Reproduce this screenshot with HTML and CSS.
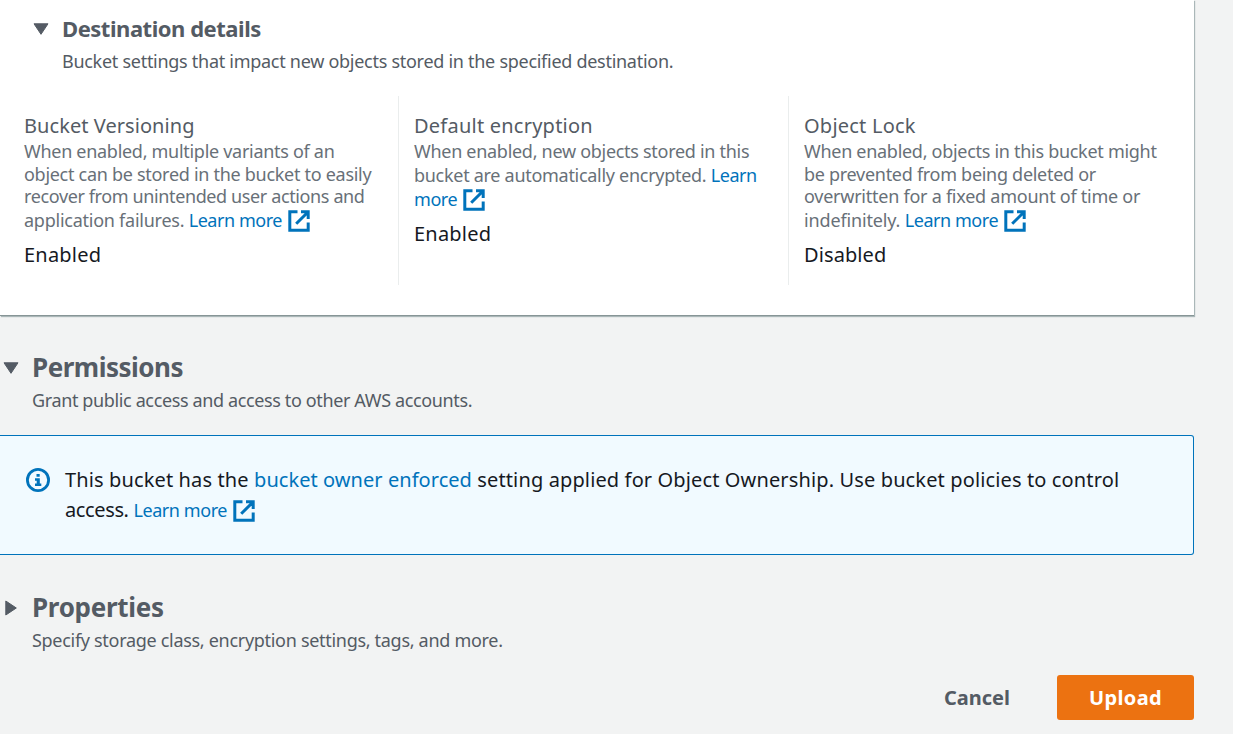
FILE: index.html
```html
<!DOCTYPE html>
<html lang="en">
<head>
<meta charset="utf-8">
<title>Upload</title>
<link rel="stylesheet" href="styles.css">
</head>
<body>
<svg width="0" height="0" class="sprite">
  <symbol id="external" viewBox="0 0 24 24"><path d="M10.5 2.8H2.8v18.4h18.4v-7.7M14 2.8h7.2V10M21 3L9.2 14.8" fill="none" stroke="#0073bb" stroke-width="3"/></symbol>
  <symbol id="caret" viewBox="0 0 16 12"><path d="M1 .8h14L8 11.3z" fill="#545b64" stroke="#545b64" stroke-linejoin="round"/></symbol>
</svg>
<main class="page">
  <section class="panel">
    <header class="panel-head">
      <svg class="caret"><use href="#caret"/></svg>
      <div>
        <h3 class="panel-title">Destination details</h3>
        <p class="sub sub-dest">Bucket settings that impact new objects stored in the specified destination.</p>
      </div>
    </header>
    <div class="columns">
      <div class="column">
        <h4 class="label label-ver">Bucket Versioning</h4>
        <p class="desc">When enabled, multiple variants of an<br>object can be stored in the bucket to easily<br><span class="tight">recover from unintended user actions and</span></p>
        <p class="desc last"><span class="loose">application failures. </span><a>Learn more</a><svg class="ext"><use href="#external"/></svg></p>
        <p class="value">Enabled</p>
      </div>
      <div class="column">
        <h4 class="label">Default encryption</h4>
        <p class="desc">When enabled, new objects stored in this</p>
        <p class="desc last"><span>bucket are automatically encrypted. </span><a>Learn</a></p>
        <p class="desc last"><a>more</a><svg class="ext"><use href="#external"/></svg></p>
        <p class="value">Enabled</p>
      </div>
      <div class="column">
        <h4 class="label">Object Lock</h4>
        <p class="desc">When enabled, objects in this bucket might<br>be prevented from being deleted or<br><span class="loose">overwritten for a fixed amount of time or</span></p>
        <p class="desc last"><span class="looser">indefinitely. </span><a>Learn more</a><svg class="ext"><use href="#external"/></svg></p>
        <p class="value value-off">Disabled</p>
      </div>
    </div>
  </section>

  <section class="section">
    <svg class="caret"><use href="#caret"/></svg>
    <div>
      <h2 class="title">Permissions</h2>
      <p class="sub sub-perm">Grant public access and access to other AWS accounts.</p>
    </div>
  </section>

  <div class="alert">
    <svg class="info" viewBox="0 0 24 24"><circle cx="12" cy="12" r="10.6" fill="none" stroke="#0073bb" stroke-width="2.8"/><path d="M10.5 6h3.2v2.8h-3.2zM9 10.2h4.8v5.3h1.5V18H9v-2.5h1.7v-2.8H9z" fill="#0073bb"/></svg>
    <div class="alert-text">
      <p class="line-one">This bucket has the <a>bucket owner enforced</a> setting applied for Object Ownership. Use bucket policies to control</p>
      <p><span class="tight">access. </span><a class="small">Learn more</a><svg class="ext"><use href="#external"/></svg></p>
    </div>
  </div>

  <section class="section properties">
    <svg class="caret closed"><use href="#caret"/></svg>
    <div>
      <h2 class="title title-props">Properties</h2>
      <p class="sub">Specify storage class, encryption settings, tags, and more.</p>
    </div>
  </section>

  <footer class="actions">
    <button class="btn">Cancel</button>
    <button class="btn primary">Upload</button>
  </footer>
</main>
</body>
</html>
```
FILE: styles.css
```css
* { box-sizing: border-box; margin: 0; padding: 0; }
body { background: #f2f3f3; font-family: "Noto Sans", "Open Sans", sans-serif; font-size: 20px; color: #16191f; white-space: nowrap; overflow: hidden; }
.sprite { position: absolute; }
a { color: #0073bb; }
.page { width: 1194px; height: 734px; }
.panel { height: 316px; background: #fff; padding-top: 13px; border-bottom: 1px solid #879596; box-shadow: 1px 1px 1px #aab7b8; }
.panel-head { display: flex; padding-left: 33px; }
.caret { width: 16px; height: 12px; margin: 10px 13px 0 0; flex: none; }
.closed { transform: rotate(-90deg); }
.panel-title { font-size: 22px; line-height: 30px; color: #545b64; letter-spacing: -0.47px; }
.sub { font-size: 18px; line-height: 24px; color: #545b64; letter-spacing: -0.3px; margin-top: 6px; }
.sub-dest { letter-spacing: -0.28px; }
.sub-perm { letter-spacing: -0.37px; }
.columns { display: grid; grid-template-columns: 398px 390px 406px; margin-top: 23px; height: 189px; }
.column { padding: 15px 0 0 24px; }
.column + .column { padding-left: 15px; border-left: 1px solid #eaeded; }
.label { font-size: 20px; line-height: 30px; font-weight: 400; color: #545b64; letter-spacing: 0.23px; margin-bottom: -1px; }
.label-ver { letter-spacing: 0.06px; }
.desc { font-size: 18px; line-height: 22.5px; color: #687078; letter-spacing: -0.29px; }
.desc.last { line-height: 24px; display: flex; white-space: pre; }
.desc a { letter-spacing: -0.45px; }
.tight { letter-spacing: -0.38px; }
.loose { letter-spacing: -0.25px; }
.looser { letter-spacing: -0.15px; }
.ext { width: 24px; height: 24px; margin: 1px 0 -1px 5px; flex: none; }
.value { line-height: 30px; margin-top: 8px; letter-spacing: 0.2px; }
.value-off { letter-spacing: 0.1px; }
.section { display: flex; padding: 33px 0 0 3px; height: 119px; }
.section .caret { margin-top: 13px; }
.title { font-size: 26px; line-height: 36px; color: #545b64; letter-spacing: -0.5px; }
.title-props { letter-spacing: -0.3px; }
.section .sub { margin-top: 3px; }
.properties { padding-top: 34px; height: 120px; }
.alert { height: 120px; border: 1px solid #0073bb; border-left: 0; border-radius: 0 3px 3px 0; background: #f1faff; display: flex; padding: 29px 0 0 26px; }
.info { width: 24px; height: 24px; margin: 3px 15px 0 0; flex: none; }
.alert-text p { line-height: 30px; display: flex; align-items: center; white-space: pre; }
.alert-text .line-one { letter-spacing: 0.13px; }
.line-one a { letter-spacing: 0.05px; }
.small { font-size: 18px; letter-spacing: -0.42px; }
.actions { display: flex; justify-content: flex-end; gap: 16px; }
.btn { height: 45px; padding: 0 31px; border: 0; border-radius: 3px; background: none; font: 700 20px/45px "Noto Sans", sans-serif; color: #545b64; }
.primary { background: #ec7211; color: #fff; width: 137px; letter-spacing: 0.4px; }
```
